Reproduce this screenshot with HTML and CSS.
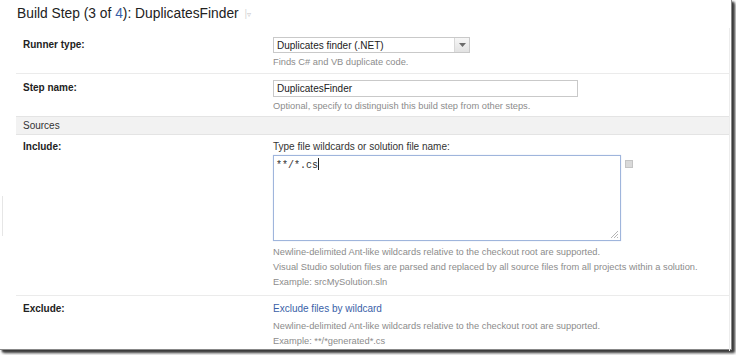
FILE: index.html
```html
<!DOCTYPE html>
<html>
<head>
<meta charset="utf-8">
<link rel="stylesheet" href="styles.css">
</head>
<body>
<div class="frame">
  <h1 class="title">Build Step (3 of <a class="link">4</a>): DuplicatesFinder <span class="menu">|<span class="tri">&#9663;</span></span></h1>
  <div class="table">
    <div class="row first">
      <div class="label">Runner type:</div>
      <div class="field">
        <div class="select"><span>Duplicates finder (.NET)</span><span class="arrow"><svg width="7" height="4" viewBox="0 0 7 4"><path d="M0 0H7L3.5 4Z" fill="#6b6b6b"/></svg></span></div>
        <div class="help">Finds C# and VB duplicate code.</div>
      </div>
    </div>
    <div class="row step">
      <div class="label">Step name:</div>
      <div class="field">
        <div class="input">DuplicatesFinder</div>
        <div class="help">Optional, specify to distinguish this build step from other steps.</div>
      </div>
    </div>
    <div class="group">Sources</div>
    <div class="row include">
      <div class="label">Include:</div>
      <div class="field">
        <div class="caption">Type file wildcards or solution file name:</div>
        <div class="areawrap">
          <div class="textarea"><span class="mono">**/*.cs</span><span class="caret"></span>
            <svg class="grip" width="8" height="8" viewBox="0 0 8 8"><path d="M8 1L1 8M8 4L4 8M8 7L7 8" stroke="#b5b5b5" stroke-width="1"/></svg>
          </div>
          <span class="chk"></span>
        </div>
        <div class="help lines">Newline-delimited Ant-like wildcards relative to the checkout root are supported.</div>
        <div class="help lines">Visual Studio solution files are parsed and replaced by all source files from all projects within a solution.</div>
        <div class="help lines">Example: srcMySolution.sln</div>
      </div>
    </div>
    <div class="row exclude">
      <div class="label">Exclude:</div>
      <div class="field">
        <a class="link excl">Exclude files by wildcard</a>
        <div class="help lines">Newline-delimited Ant-like wildcards relative to the checkout root are supported.</div>
        <div class="help lines">Example: **/*generated*.cs</div>
      </div>
    </div>
  </div>
  <span class="edge"></span>
</div>
</body>
</html>
```
FILE: styles.css
```css
html, body {
  margin: 0;
  padding: 0;
  background: #ffffff;
}
body {
  font-family: "Liberation Sans", Arial, sans-serif;
  color: #222;
  width: 736px;
  height: 355px;
  overflow: hidden;
}
.frame {
  position: relative;
  width: 732px;
  height: 350px;
  background: #fff;
  box-shadow: 2px 2px 2px #3a3a3a, 3px 3px 3px #555;
  border-right: 1px solid #888;
  border-bottom: 1px solid #888;
  box-sizing: border-box;
}
.title {
  margin: 0;
  padding: 5px 0 0 17px;
  height: 28px;
  box-sizing: border-box;
  font-weight: normal;
  font-size: 13.8px;
  color: #222;
  line-height: 17px;
}
.link {
  color: #3a5fa8;
  text-decoration: none;
}
.menu {
  color: #d8d8d8;
  font-size: 10px;
  margin-left: 2px;
  vertical-align: 1px;
}
.tri {
  font-size: 8px;
  color: #c8c8c8;
}
.table {
  margin-left: 16px;
  width: 713px;
  border-right: 1px solid #ececec;
}
.row {
  display: flex;
  border-top: 1px solid #ebebeb;
  padding: 5px 0 0 0;
}
.row.first {
  border-top: none;
  height: 45px;
  box-sizing: border-box;
  padding-top: 9px;
}
.label {
  width: 257px;
  padding-left: 7px;
  box-sizing: border-box;
  font-weight: bold;
  font-size: 10px;
  line-height: 12px;
  padding-top: 2px;
  color: #222;
}
.field {
  flex: 1;
  font-size: 10px;
}
.select {
  width: 197px;
  height: 16px;
  border: 1px solid #c9c9c9;
  box-sizing: border-box;
  display: flex;
  justify-content: space-between;
  align-items: center;
  font-size: 10px;
  padding-left: 3px;
  color: #222;
}
.arrow {
  width: 14px;
  height: 14px;
  border-left: 1px solid #d8d8d8;
  background: linear-gradient(#f6f6f6, #e2e2e2);
  display: flex;
  align-items: center;
  justify-content: center;
}
.help {
  color: #8c8c8c;
  font-size: 9.3px;
  margin-top: 3px;
  line-height: 12px;
}
.row.step {
  height: 42px;
  box-sizing: border-box;
  padding-top: 6px;
}
.input {
  width: 305px;
  height: 17px;
  border: 1px solid #c9c9c9;
  box-sizing: border-box;
  padding-left: 3px;
  line-height: 15px;
  font-size: 10px;
}
.group {
  background: #f2f2f2;
  border-top: 1px solid #e4e4e4;
  border-bottom: 1px solid #e4e4e4;
  height: 19px;
  box-sizing: border-box;
  margin-top: 1px;
  padding-left: 7px;
  font-size: 10px;
  line-height: 17px;
  color: #333;
}
.row.include {
  border-top: none;
  height: 160px;
  box-sizing: border-box;
  padding-top: 6px;
}
.row.include .label,
.row.exclude .label {
  padding-top: 0;
}
.caption {
  font-size: 10px;
  line-height: 12px;
  color: #333;
}
.areawrap {
  display: flex;
  align-items: flex-start;
  margin-top: 2px;
}
.textarea {
  position: relative;
  width: 348px;
  height: 86px;
  border: 1px solid #9fb5dc;
  box-shadow: 0 0 1px #c6d4ee;
  box-sizing: border-box;
  padding: 2px 2px;
  font-family: "Liberation Mono", "Courier New", monospace;
  font-size: 10px;
  line-height: 12px;
  color: #333;
}
.caret {
  display: inline-block;
  width: 1px;
  height: 12px;
  background: #222;
  vertical-align: -2px;
}
.grip {
  position: absolute;
  right: 2px;
  bottom: 2px;
}
.chk {
  width: 6px;
  height: 6px;
  background: #d9d9d9;
  border: 1px solid #c4c4c4;
  margin: 5px 0 0 4px;
}
.lines {
  margin-top: 3px;
}
.areawrap + .lines {
  margin-top: 5px;
}
.row.exclude {
  padding-top: 7px;
  height: 56px;
  box-sizing: border-box;
}
.excl {
  font-size: 10px;
  line-height: 12px;
  display: block;
}
.excl + .lines {
  margin-top: 5px;
}
.edge {
  position: absolute;
  left: 2px;
  top: 196px;
  width: 1px;
  height: 40px;
  background: #e6e6e6;
}
```
